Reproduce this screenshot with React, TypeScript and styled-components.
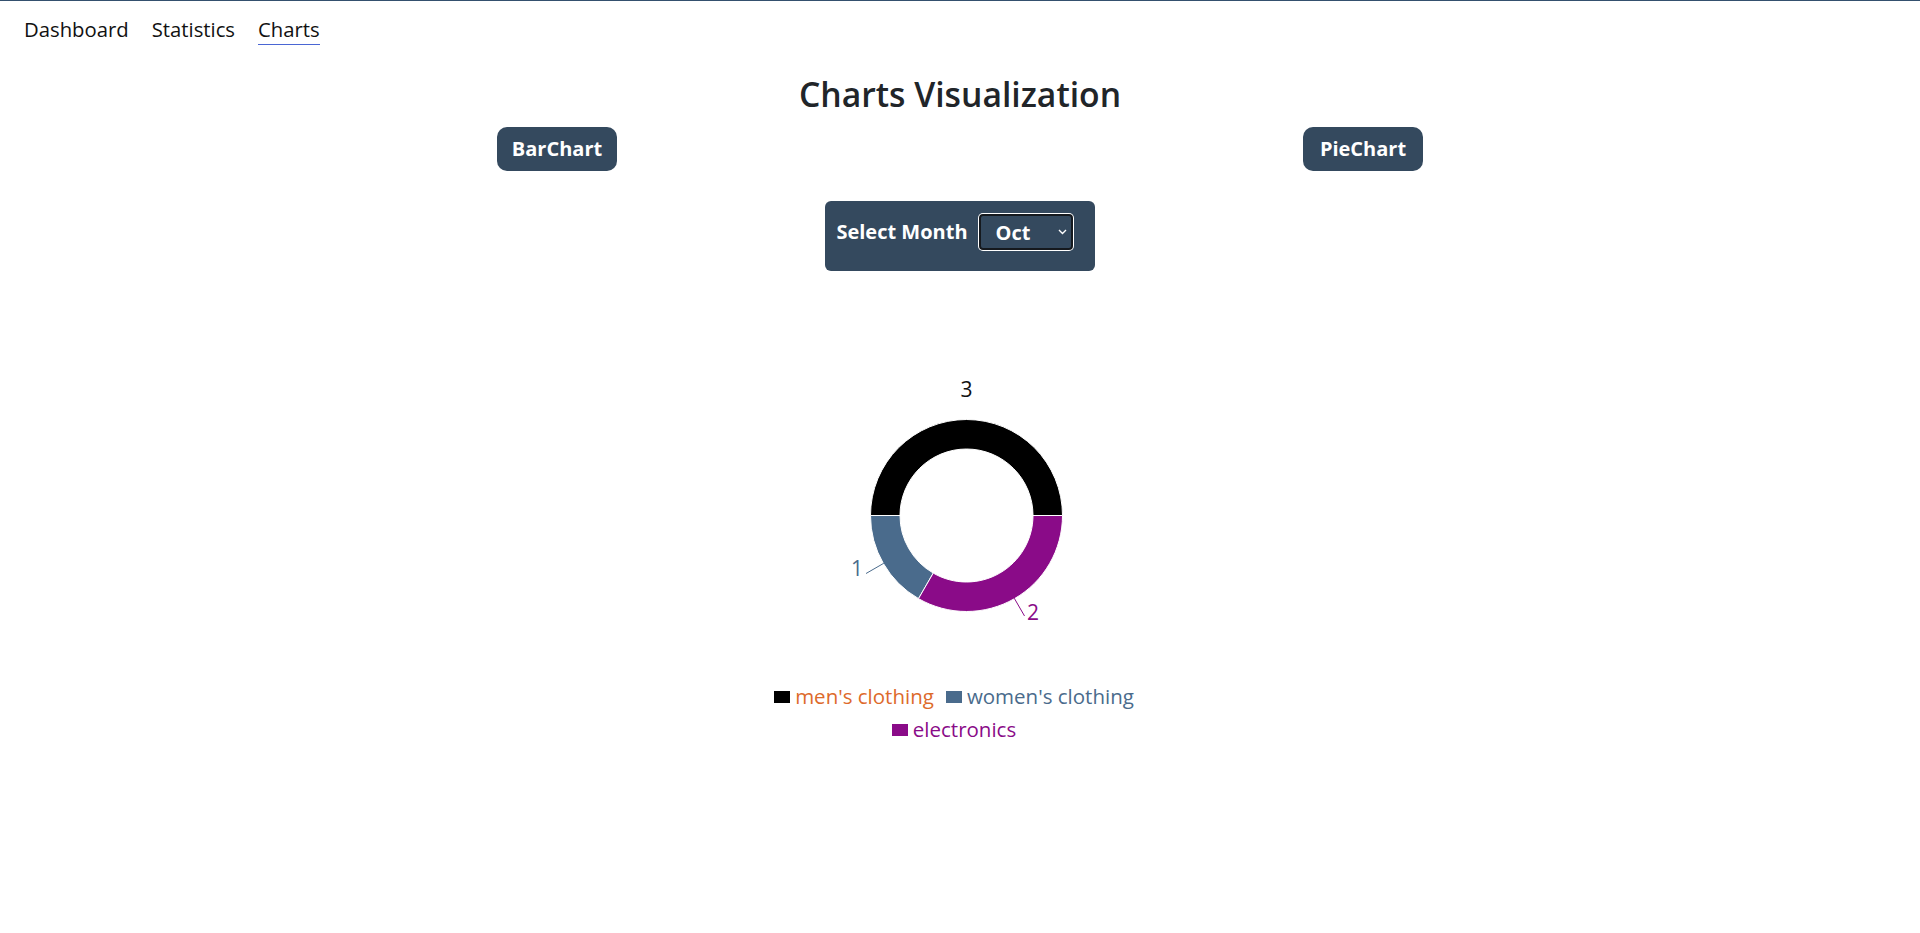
import React, { useState } from "react";
import styled, { createGlobalStyle } from "styled-components";

const GlobalStyle = createGlobalStyle`
  html, body {
    margin: 0;
    padding: 0;
    background: #ffffff;
    font-family: "Open Sans", "Noto Sans", "Liberation Sans", sans-serif;
    color: #111111;
  }
  * { box-sizing: border-box; }
`;

const Page = styled.div`
  border-top: 1px solid #34506e;
  min-height: 933px;
`;

const TopNav = styled.nav`
  display: flex;
  align-items: flex-start;
  gap: 23px;
  padding: 15px 0 0 24px;
`;

const NavLink = styled.a<{ $active?: boolean }>`
  font-size: 20.3px;
  line-height: 27px;
  color: #111111;
  text-decoration: none;
  padding-bottom: 1px;
  border-bottom: 1px solid ${(p) => (p.$active ? "#4a66d4" : "transparent")};
  cursor: pointer;
`;

const Title = styled.h1`
  margin: 29px 0 0;
  text-align: center;
  font-size: 33.7px;
  line-height: 40px;
  font-weight: 600;
  color: #212529;
`;

const ButtonRow = styled.div`
  display: grid;
  grid-template-columns: 1fr 1fr;
  justify-items: center;
  max-width: 1612px;
  margin: 13px auto 0;
`;

const ChartButton = styled.button`
  width: 120px;
  height: 44px;
  padding: 0;
  border: none;
  border-radius: 10px;
  background: #34495e;
  color: #ffffff;
  font-family: inherit;
  font-size: 20px;
  font-weight: 700;
  line-height: 24px;
  text-align: center;
  cursor: pointer;
`;

const MonthBar = styled.div`
  display: flex;
  align-items: center;
  gap: 10px;
  width: fit-content;
  margin: 30px auto 0;
  padding: 12px 21px 20px 11px;
  border-radius: 6px;
  background: #34495e;
`;

const MonthLabel = styled.label`
  color: #ffffff;
  font-size: 20px;
  font-weight: 700;
  line-height: 26px;
`;

const SelectWrap = styled.div`
  position: relative;
  display: flex;
`;

const MonthSelect = styled.select`
  appearance: none;
  -webkit-appearance: none;
  width: 94px;
  height: 36px;
  margin: 1px;
  padding: 0 0 0 15px;
  border: 2px solid #15191e;
  border-radius: 4px;
  box-shadow: 0 0 0 1px #ffffff;
  background: #34495e;
  color: #ffffff;
  font-family: inherit;
  font-size: 20px;
  font-weight: 700;
  outline: none;
`;

const Chevron = styled.svg`
  position: absolute;
  right: 7px;
  top: 16px;
  pointer-events: none;
`;

const ChartArea = styled.div`
  display: flex;
  flex-direction: column;
  align-items: center;
  margin-top: 40px;
`;

const PieSvg = styled.svg`
  display: block;
`;

const LegendList = styled.ul`
  display: flex;
  flex-wrap: wrap;
  justify-content: center;
  column-gap: 12px;
  width: 400px;
  margin: 29px 0 0;
  padding: 0 12px 0 0;
  list-style: none;
`;

const LegendItem = styled.li`
  display: flex;
  align-items: center;
  height: 33px;
`;

const LegendSwatch = styled.span<{ $color: string }>`
  display: inline-block;
  width: 16px;
  height: 12px;
  margin-right: 5px;
  background: ${(p) => p.$color};
`;

const LegendText = styled.span<{ $color: string }>`
  font-size: 20.5px;
  line-height: 27px;
  color: ${(p) => p.$color};
`;

const months = ["Jan", "Feb", "Mar", "Apr", "May", "Jun", "Jul", "Aug", "Sep", "Oct", "Nov", "Dec"];

const data = [
  { name: "men's clothing", value: 3, fill: "#000000", text: "#dd6a2b" },
  { name: "women's clothing", value: 1, fill: "#4a6b8c", text: "#4a6b8c" },
  { name: "electronics", value: 2, fill: "#8a0b88", text: "#8a0b88" },
];

const CX = 206.5;
const CY = 204.5;
const RO = 96;
const RI = 66.5;

function pt(r: number, a: number): [number, number] {
  const rad = (a * Math.PI) / 180;
  return [CX + r * Math.cos(rad), CY - r * Math.sin(rad)];
}

function sector(a0: number, a1: number): string {
  const [x0, y0] = pt(RO, a0);
  const [x1, y1] = pt(RO, a1);
  const [x2, y2] = pt(RI, a1);
  const [x3, y3] = pt(RI, a0);
  const large = a1 - a0 > 180 ? 1 : 0;
  return `M${x0},${y0} A${RO},${RO} 0 ${large} 0 ${x1},${y1} L${x2},${y2} A${RI},${RI} 0 ${large} 1 ${x3},${y3} Z`;
}

export default function App() {
  const [month, setMonth] = useState("Oct");
  const total = data.reduce((s, d) => s + d.value, 0);
  let acc = 0;
  const slices = data.map((d) => {
    const a0 = (acc / total) * 360;
    acc += d.value;
    const a1 = (acc / total) * 360;
    return { ...d, a0, a1, mid: (a0 + a1) / 2 };
  });

  return (
    <Page>
      <GlobalStyle />
      <TopNav>
        <NavLink>Dashboard</NavLink>
        <NavLink>Statistics</NavLink>
        <NavLink $active>Charts</NavLink>
      </TopNav>
      <Title>Charts Visualization</Title>
      <ButtonRow>
        <ChartButton>BarChart</ChartButton>
        <ChartButton>PieChart</ChartButton>
      </ButtonRow>
      <MonthBar>
        <MonthLabel htmlFor="month">Select Month</MonthLabel>
        <SelectWrap>
          <MonthSelect id="month" value={month} onChange={(e) => setMonth(e.target.value)}>
            {months.map((m) => (
              <option key={m} value={m}>
                {m}
              </option>
            ))}
          </MonthSelect>
          <Chevron width="9" height="6" viewBox="0 0 9 6">
            <polyline points="1,1 4.5,4.5 8,1" fill="none" stroke="#ffffff" strokeWidth="1.4" />
          </Chevron>
        </SelectWrap>
      </MonthBar>
      <ChartArea>
        <PieSvg width="400" height="340" viewBox="0 0 400 340">
          {slices.map((s) => (
            <path key={s.name} d={sector(s.a0, s.a1)} fill={s.fill} stroke="#ffffff" strokeWidth="1" />
          ))}
          {slices.map((s) => {
            if (s.mid === 90) return null;
            const [lx0, ly0] = pt(RO - 0.5, s.mid);
            const [lx1, ly1] = pt(RO + 20, s.mid);
            return <line key={s.name + "l"} x1={lx0} y1={ly0} x2={lx1} y2={ly1} stroke={s.fill} strokeWidth="1" />;
          })}
          <text x={CX} y={85.7} textAnchor="middle" fontSize="21" fontFamily="Open Sans, sans-serif" fill="#111111">
            3
          </text>
          <text x={103} y={265} textAnchor="end" fontSize="21" fontFamily="Open Sans, sans-serif" fill="#4a6b8c">
            1
          </text>
          <text x={267} y={308.5} textAnchor="start" fontSize="21" fontFamily="Open Sans, sans-serif" fill="#8a0b88">
            2
          </text>
        </PieSvg>
        <LegendList>
          {data.map((d) => (
            <LegendItem key={d.name}>
              <LegendSwatch $color={d.fill} />
              <LegendText $color={d.text}>{d.name}</LegendText>
            </LegendItem>
          ))}
        </LegendList>
      </ChartArea>
    </Page>
  );
}
